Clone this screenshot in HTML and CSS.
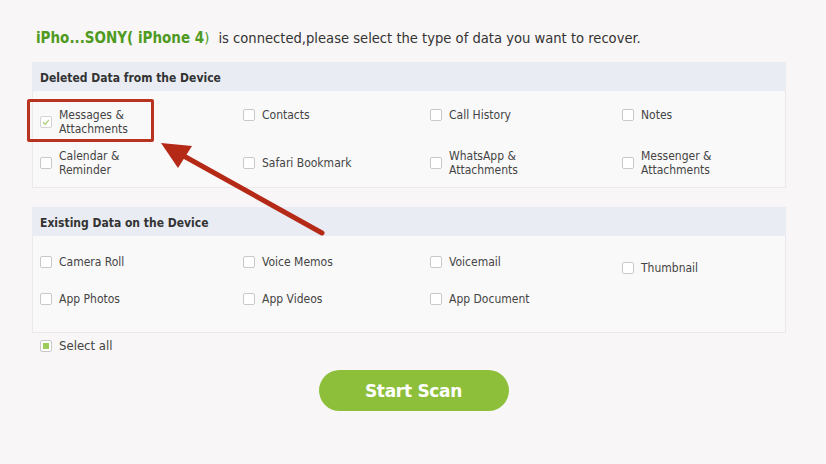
FILE: index.html
```html
<!DOCTYPE html>
<html>
<head>
<meta charset="utf-8">
<link rel="stylesheet" href="styles.css">
</head>
<body>
<div class="page">
  <p class="intro"><span class="device">iPho...SONY( iPhone 4</span><span class="paren">)</span> is connected,please select the type of data you want to recover.</p>

  <section class="group">
    <h2 class="group-title">Deleted Data from the Device</h2>
    <div class="panel panel-deleted">
      <label class="item"><span class="box checked"><svg viewBox="0 0 12 12"><path d="M3 6.2 L5.2 8.3 L9 3.8" fill="none" stroke="#a9cf74" stroke-width="1.2"/></svg></span><span class="txt">Messages &amp;<br>Attachments</span></label>
      <label class="item"><span class="box"></span><span class="txt">Contacts</span></label>
      <label class="item"><span class="box"></span><span class="txt">Call History</span></label>
      <label class="item"><span class="box"></span><span class="txt">Notes</span></label>
      <label class="item"><span class="box"></span><span class="txt">Calendar &amp;<br>Reminder</span></label>
      <label class="item"><span class="box"></span><span class="txt">Safari Bookmark</span></label>
      <label class="item"><span class="box"></span><span class="txt">WhatsApp &amp;<br>Attachments</span></label>
      <label class="item"><span class="box"></span><span class="txt">Messenger &amp;<br>Attachments</span></label>
    </div>
  </section>

  <section class="group group-existing">
    <h2 class="group-title">Existing Data on the Device</h2>
    <div class="panel panel-existing">
      <label class="item"><span class="box"></span><span class="txt">Camera Roll</span></label>
      <label class="item"><span class="box"></span><span class="txt">Voice Memos</span></label>
      <label class="item"><span class="box"></span><span class="txt">Voicemail</span></label>
      <label class="item item-thumb"><span class="box"></span><span class="txt">Thumbnail</span></label>
      <label class="item"><span class="box"></span><span class="txt">App Photos</span></label>
      <label class="item"><span class="box"></span><span class="txt">App Videos</span></label>
      <label class="item"><span class="box"></span><span class="txt">App Document</span></label>
    </div>
  </section>

  <label class="select-all"><span class="box filled"><span class="fill"></span></span><span class="txt">Select all</span></label>

  <div class="actions"><button class="scan">Start Scan</button></div>

  <div class="highlight"></div>
  <svg class="arrow" width="826" height="464" viewBox="0 0 826 464">
    <line x1="322" y1="233" x2="182" y2="155" stroke="#b52a17" stroke-width="5" stroke-linecap="round"/>
    <polygon points="161,143 192,146 178,168" fill="#b52a17"/>
  </svg>
</div>
</body>
</html>
```

FILE: styles.css
```css
html, body {
  margin: 0;
  padding: 0;
  background: #f8f6f6;
}
body {
  font-family: "DejaVu Sans Condensed", "DejaVu Sans", sans-serif;
  font-stretch: condensed;
  color: #3c3c3c;
}
.page {
  position: relative;
  width: 826px;
  height: 464px;
  padding: 0 40px 0 32px;
  box-sizing: border-box;
}
.intro {
  margin: 0;
  padding: 29px 0 0 4px;
  height: 33px;
  font-size: 14.6px;
  line-height: 18px;
  color: #333;
}
.device {
  color: #4e9a1f;
  font-weight: bold;
  font-size: 15px;
}
.paren {
  color: #4e9a1f;
  padding-right: 5px;
}
.group-title {
  margin: 0;
  height: 29px;
  line-height: 32px;
  padding-left: 8px;
  background: #e9edf3;
  font-size: 12px;
  font-weight: bold;
  color: #333;
}
.group-existing {
  margin-top: 19px;
}
.panel {
  display: grid;
  grid-template-columns: 203px 187px 192px 1fr;
  padding-left: 7px;
  background: #faf9f9;
  border: 1px solid #ebe9e9;
  border-top: none;
  box-sizing: border-box;
  height: 97px;
  align-content: start;
}
.panel-deleted {
  grid-template-rows: 28px 28px;
  row-gap: 13px;
  padding-top: 17px;
}
.panel-deleted .item:nth-child(-n+4) {
  align-self: start;
}
.panel-deleted .item:nth-child(n+5) {
  align-self: center;
}
.panel-existing {
  grid-template-rows: 30px 30px;
  row-gap: 7px;
  padding-top: 11px;
  align-items: center;
}
.item-thumb {
  margin-top: 12px;
}
.item, .select-all {
  display: flex;
  align-items: center;
  font-size: 12px;
  line-height: 14px;
  color: #444;
}
.box {
  flex: none;
  width: 10px;
  height: 10px;
  border: 1px solid #c9c9c9;
  border-radius: 2px;
  background: #fff;
  margin-right: 7px;
  position: relative;
}
.box svg {
  position: absolute;
  left: -1px;
  top: -1px;
  width: 12px;
  height: 12px;
}
.checked {
  border-color: #d3d3d3;
}
.select-all {
  padding-left: 8px;
  margin-top: 6px;
  height: 14px;
  font-size: 13px;
}
.filled {
  display: flex;
  align-items: center;
  justify-content: center;
}
.fill {
  width: 6px;
  height: 6px;
  background: #9ccc5c;
}
.actions {
  display: flex;
  justify-content: center;
  padding-left: 9px;
  margin-top: 17px;
}
.scan {
  width: 190px;
  height: 41px;
  border: none;
  border-radius: 21px;
  background: #8dbf3b;
  color: #fff;
  font-family: "DejaVu Sans", sans-serif;
  font-weight: bold;
  font-size: 17px;
  letter-spacing: -0.3px;
}
.highlight {
  position: absolute;
  left: 27px;
  top: 99px;
  width: 121px;
  height: 37px;
  border: 3px solid #b83420;
  border-radius: 2px;
}
.arrow {
  position: absolute;
  left: 0;
  top: 0;
  pointer-events: none;
}
```
